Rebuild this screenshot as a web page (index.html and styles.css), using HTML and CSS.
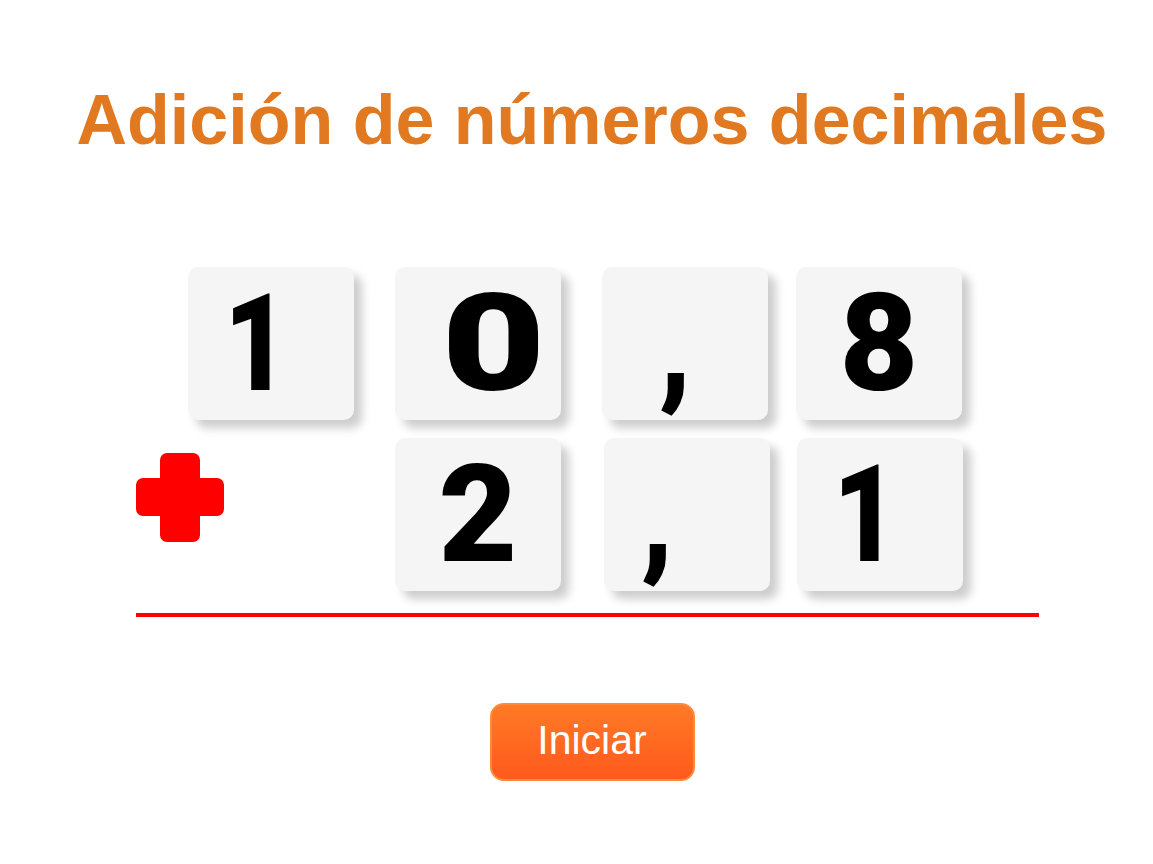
FILE: index.html
```html
<!DOCTYPE html>
<html lang="es">
<head>
<meta charset="utf-8">
<title>Adición de números decimales</title>
<link rel="stylesheet" href="styles.css">
</head>
<body>
<main class="page">
  <h1 class="title">Adición de números decimales</h1>
  <section class="sum">
    <div class="row row-top">
      <div class="tile"><span class="glyph glyph-one">1</span></div>
      <div class="tile"><span class="glyph glyph-zero">0</span></div>
      <div class="tile"><span class="glyph glyph-comma">,</span></div>
      <div class="tile tile-last"><span class="glyph">8</span></div>
    </div>
    <div class="row row-bottom">
      <svg class="plus" viewBox="0 0 88 89" aria-label="más">
        <rect x="24" y="0" width="40" height="89" rx="7" fill="#ff0000"/>
        <rect x="0" y="25" width="88" height="38" rx="7" fill="#ff0000"/>
      </svg>
      <div class="tile"><span class="glyph">2</span></div>
      <div class="tile"><span class="glyph glyph-comma glyph-comma2">,</span></div>
      <div class="tile tile-last2"><span class="glyph glyph-one">1</span></div>
    </div>
    <div class="rule"></div>
  </section>
  <div class="actions">
    <button class="start" type="button">Iniciar</button>
  </div>
</main>
</body>
</html>
```

FILE: styles.css
```css
html, body {
  margin: 0;
  padding: 0;
  background: #ffffff;
}

.page {
  width: 1153px;
  height: 864px;
  overflow: hidden;
}

.title {
  margin: 80px 0 0 31px;
  font-family: "Liberation Sans", Arial, sans-serif;
  font-weight: bold;
  font-size: 70px;
  line-height: 80px;
  color: #e17921;
  text-align: center;
}

.sum {
  margin-top: 107px;
  display: flex;
  flex-direction: column;
}

.row {
  display: flex;
  align-items: flex-start;
}

.row-top {
  margin-left: 188px;
  gap: 41px;
}

.row-bottom {
  margin-top: 18px;
  margin-left: 136px;
  gap: 43px;
}

.tile {
  width: 166px;
  height: 153px;
  box-sizing: border-box;
  background: #f5f5f5;
  border-radius: 10px;
  box-shadow: 8px 8px 10px rgba(0, 0, 0, 0.2);
  display: flex;
  align-items: center;
  justify-content: center;
  font-family: Roboto, "Liberation Sans", sans-serif;
  font-weight: 900;
  font-size: 136px;
  line-height: 1;
  color: #000000;
}

.glyph {
  display: block;
}

.glyph-one {
  transform: translateX(-15px) scaleX(0.82);
}

.glyph-zero {
  transform: translateX(15px) scaleX(1.32);
}

.glyph-comma {
  transform: translateX(-10px) scaleX(0.9);
}

.glyph-comma2 {
  transform: translateX(-30px) scaleX(0.9);
}

.tile-last {
  margin-left: -13px;
}

.tile-last2 {
  margin-left: -16px;
}

.plus {
  width: 88px;
  height: 89px;
  margin-top: 15px;
  margin-right: 128px;
  flex: none;
}

.rule {
  margin: 22px 0 0 136px;
  width: 903px;
  height: 4px;
  background: #ff0000;
}

.actions {
  margin: 86px 0 0 31px;
  display: flex;
  justify-content: center;
}

.start {
  width: 205px;
  height: 78px;
  box-sizing: border-box;
  border: 2px solid #ff8a3a;
  border-radius: 14px;
  background: linear-gradient(#ff7a26, #ff5a1c);
  color: #ffffff;
  font-family: "Liberation Sans", Arial, sans-serif;
  font-size: 41px;
  line-height: 1;
  padding: 0 0 3px;
  cursor: pointer;
}
```
